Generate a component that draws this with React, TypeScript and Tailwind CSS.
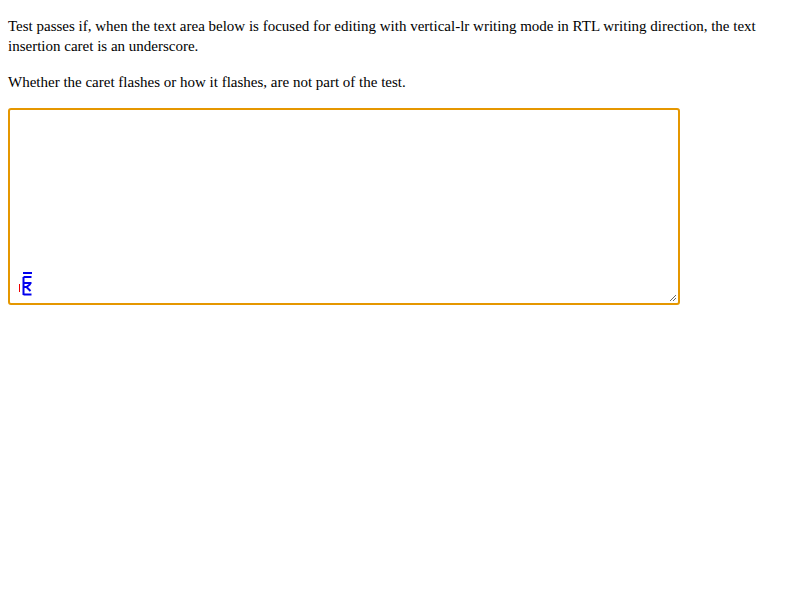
import React from 'react';

const App: React.FC = () => {
  return (
    <div className="min-h-[600px] w-[800px] bg-white p-2 text-black font-['Liberation_Serif',serif] text-[15px] leading-5">
      <p className="mt-2 mb-4">
        Test passes if, when the text area below is focused for editing with vertical-lr writing mode in RTL writing
        direction, the text insertion caret is an underscore.
      </p>
      <p className="mb-4">Whether the caret flashes or how it flashes, are not part of the test.</p>

      {/* Fake focused textarea */}
      <div className="relative h-[197px] w-[672px] rounded-[3px] border-2 border-[#e59700]">
        <svg className="absolute left-[9px] top-[162px]" width="24" height="26" viewBox="0 0 24 26">
          <rect x="0" y="12" width="1" height="8" fill="#e00" />
          <rect x="4" y="0" width="9" height="2" fill="#0000ee" />
          <path d="M4.5 5v18M4.5 5h8M4.5 11h8M4.5 15h3M7.5 15l4 4M7.5 15l4-3M4.5 22.5h8" stroke="#0000ee" strokeWidth="2" fill="none" />
        </svg>
        <svg className="absolute bottom-[1px] right-[1px]" width="8" height="8" viewBox="0 0 8 8">
          <path d="M7 1L1 7M7 4L4 7" stroke="#666" strokeWidth="1" />
        </svg>
      </div>
    </div>
  );
};

export default App;
